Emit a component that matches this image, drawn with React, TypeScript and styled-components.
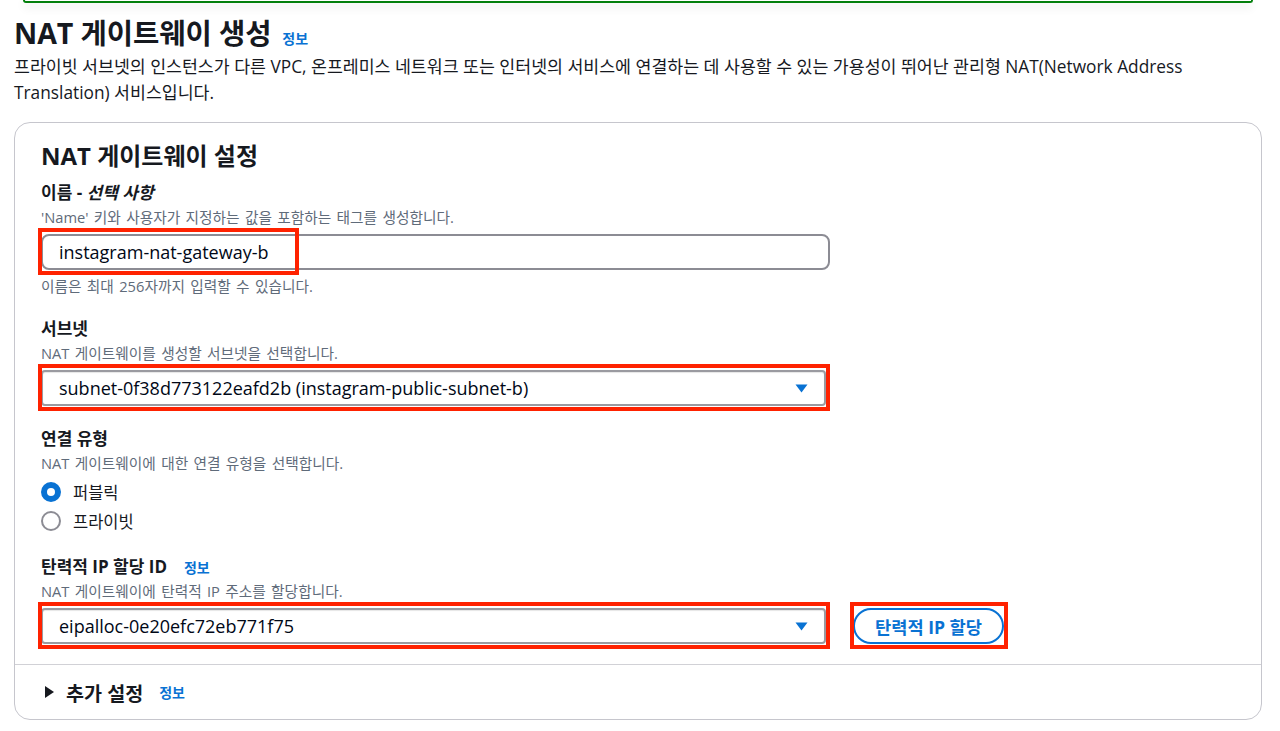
import React from "react";
import styled, { createGlobalStyle } from "styled-components";

const Global = createGlobalStyle`
  html, body { margin: 0; padding: 0; background: #ffffff; }
  body {
    font-family: "Open Sans", "Noto Sans CJK KR", "Noto Sans", sans-serif;
    color: #16191f;
    -webkit-font-smoothing: antialiased;
  }
  * { box-sizing: border-box; }
`;

const Page = styled.div`
  width: 1280px;
  height: 731px;
  overflow: hidden;
  padding: 0 18px 0 14px;
  display: flex;
  flex-direction: column;
`;

const Flash = styled.div`
  height: 3px;
  margin: 0 9px 0 9px;
  border: 2px solid #037f0c;
  border-top: none;
  border-radius: 0 0 10px 10px;
  box-shadow: 0 4px 10px rgba(0, 0, 0, 0.12);
`;

const TitleRow = styled.div`
  display: flex;
  align-items: baseline;
  gap: 11px;
  margin-top: 12px;
`;

const Title = styled.h1`
  margin: 0;
  font-size: 28.6px;
  line-height: 36px;
  font-weight: 700;
  letter-spacing: -0.1px;
`;

const Info = styled.a<{ $size?: number }>`
  color: #0972d3;
  font-size: ${(p) => p.$size ?? 14}px;
  font-weight: 700;
  text-decoration: none;
`;

const Lead = styled.p`
  margin: 3px 0 0;
  font-size: 17.3px;
  line-height: 26px;
  max-width: 1190px;
  color: #16191f;
`;

const Card = styled.section`
  margin-top: 16px;
  border: 1px solid #c6c6cd;
  border-radius: 16px;
  display: flex;
  flex-direction: column;
`;

const CardBody = styled.div`
  padding: 17px 26px 20px;
  display: flex;
  flex-direction: column;
`;

const CardTitle = styled.h2`
  margin: 0 0 10px;
  font-size: 24px;
  line-height: 32px;
  font-weight: 700;
`;

const Field = styled.div<{ $gap?: number }>`
  display: flex;
  flex-direction: column;
  margin-top: ${(p) => p.$gap ?? 0}px;
`;

const LabelRow = styled.div`
  display: flex;
  align-items: baseline;
  gap: 17px;
`;

const Label = styled.label`
  font-size: 17px;
  line-height: 22px;
  font-weight: 700;
  em { font-style: italic; }
`;

const Desc = styled.div`
  margin-top: 3px;
  font-size: 14.7px;
  line-height: 20px;
  word-spacing: 1.5px;
  color: #5f6b7a;
`;

const Hint = styled(Desc)`
  margin-top: 6px;
`;

const Control = styled.div`
  margin-top: 7px;
  display: flex;
  align-items: center;
  gap: 27px;
`;

const Highlight = styled.div<{ $w?: number }>`
  position: relative;
  &::after {
    content: "";
    position: absolute;
    top: -6px;
    bottom: -5px;
    left: -3px;
    ${(p) => (p.$w ? `width: ${p.$w}px;` : "right: -4px;")}
    border: 4px solid #ff2200;
    pointer-events: none;
  }
`;

const Input = styled.div`
  width: 789px;
  height: 36px;
  border: 2px solid #8c8c94;
  border-radius: 8px;
  padding: 0 16px;
  display: flex;
  align-items: center;
  font-size: 18px;
  color: #000716;
`;

const Select = styled(Input)`
  width: 785px;
  border-radius: 4px;
  border-color: #9a9aa0;
  justify-content: space-between;
  padding-right: 16px;
  box-shadow: inset 0 1px 1px rgba(0,0,0,0.1);
`;

const Caret = styled.svg`
  width: 13px;
  height: 9px;
  flex: none;
`;

const RadioList = styled.div`
  margin-top: 4px;
  display: flex;
  flex-direction: column;
`;

const RadioItem = styled.div`
  display: flex;
  align-items: center;
  gap: 12px;
  height: 29px;
  font-size: 16.5px;
`;

const RadioDot = styled.span<{ $on?: boolean }>`
  width: 20px;
  height: 20px;
  border-radius: 50%;
  flex: none;
  border: ${(p) => (p.$on ? "6px solid #0972d3" : "2px solid #8c8c94")};
  background: #fff;
`;

const PillButton = styled.button`
  height: 36px;
  width: 151px;
  border: 2px solid #0972d3;
  border-radius: 20px;
  background: #fff;
  color: #0972d3;
  font-family: inherit;
  font-size: 17.6px;
  font-weight: 700;
  padding: 0;
`;

const Footer = styled.div`
  border-top: 1px solid #d1d1d6;
  height: 55px;
  padding: 0 30px;
  display: flex;
  align-items: center;
  gap: 12px;
`;

const FooterTitle = styled.span`
  font-size: 19.6px;
  font-weight: 700;
  margin-right: 4px;
`;

const Tri = styled.svg`
  width: 9px;
  height: 12px;
  flex: none;
`;

const CaretIcon = () => (
  <Caret viewBox="0 0 13 9">
    <path d="M0.5 0.5 L12.5 0.5 L6.5 8.5 Z" fill="#0972d3" />
  </Caret>
);

export default function App() {
  return (
    <>
      <Global />
      <Page>
        <Flash />
        <TitleRow>
          <Title>NAT 게이트웨이 생성</Title>
          <Info href="#">정보</Info>
        </TitleRow>
        <Lead>
          프라이빗 서브넷의 인스턴스가 다른 VPC, 온프레미스 네트워크 또는 인터넷의 서비스에 연결하는 데 사용할 수 있는 가용성이 뛰어난 관리형 NAT(Network Address Translation) 서비스입니다.
        </Lead>
        <Card>
          <CardBody>
            <CardTitle>NAT 게이트웨이 설정</CardTitle>
            <Field>
              <Label>
                이름 - <em>선택 사항</em>
              </Label>
              <Desc>'Name' 키와 사용자가 지정하는 값을 포함하는 태그를 생성합니다.</Desc>
              <Control>
                <Highlight $w={253}>
                  <Input>instagram-nat-gateway-b</Input>
                </Highlight>
              </Control>
              <Hint>이름은 최대 256자까지 입력할 수 있습니다.</Hint>
            </Field>
            <Field $gap={22}>
              <Label>서브넷</Label>
              <Desc>NAT 게이트웨이를 생성할 서브넷을 선택합니다.</Desc>
              <Control>
                <Highlight>
                  <Select>
                    <span>subnet-0f38d773122eafd2b (instagram-public-subnet-b)</span>
                    <CaretIcon />
                  </Select>
                </Highlight>
              </Control>
            </Field>
            <Field $gap={22}>
              <Label>연결 유형</Label>
              <Desc>NAT 게이트웨이에 대한 연결 유형을 선택합니다.</Desc>
              <RadioList>
                <RadioItem>
                  <RadioDot $on />
                  퍼블릭
                </RadioItem>
                <RadioItem>
                  <RadioDot />
                  프라이빗
                </RadioItem>
              </RadioList>
            </Field>
            <Field $gap={21}>
              <LabelRow>
                <Label>탄력적 IP 할당 ID</Label>
                <Info href="#">정보</Info>
              </LabelRow>
              <Desc>NAT 게이트웨이에 탄력적 IP 주소를 할당합니다.</Desc>
              <Control>
                <Highlight>
                  <Select>
                    <span>eipalloc-0e20efc72eb771f75</span>
                    <CaretIcon />
                  </Select>
                </Highlight>
                <Highlight>
                  <PillButton>탄력적 IP 할당</PillButton>
                </Highlight>
              </Control>
            </Field>
          </CardBody>
          <Footer>
            <Tri viewBox="0 0 9 12">
              <path d="M0 0 L9 6 L0 12 Z" fill="#16191f" />
            </Tri>
            <FooterTitle>추가 설정</FooterTitle>
            <Info href="#">정보</Info>
          </Footer>
        </Card>
      </Page>
    </>
  );
}
